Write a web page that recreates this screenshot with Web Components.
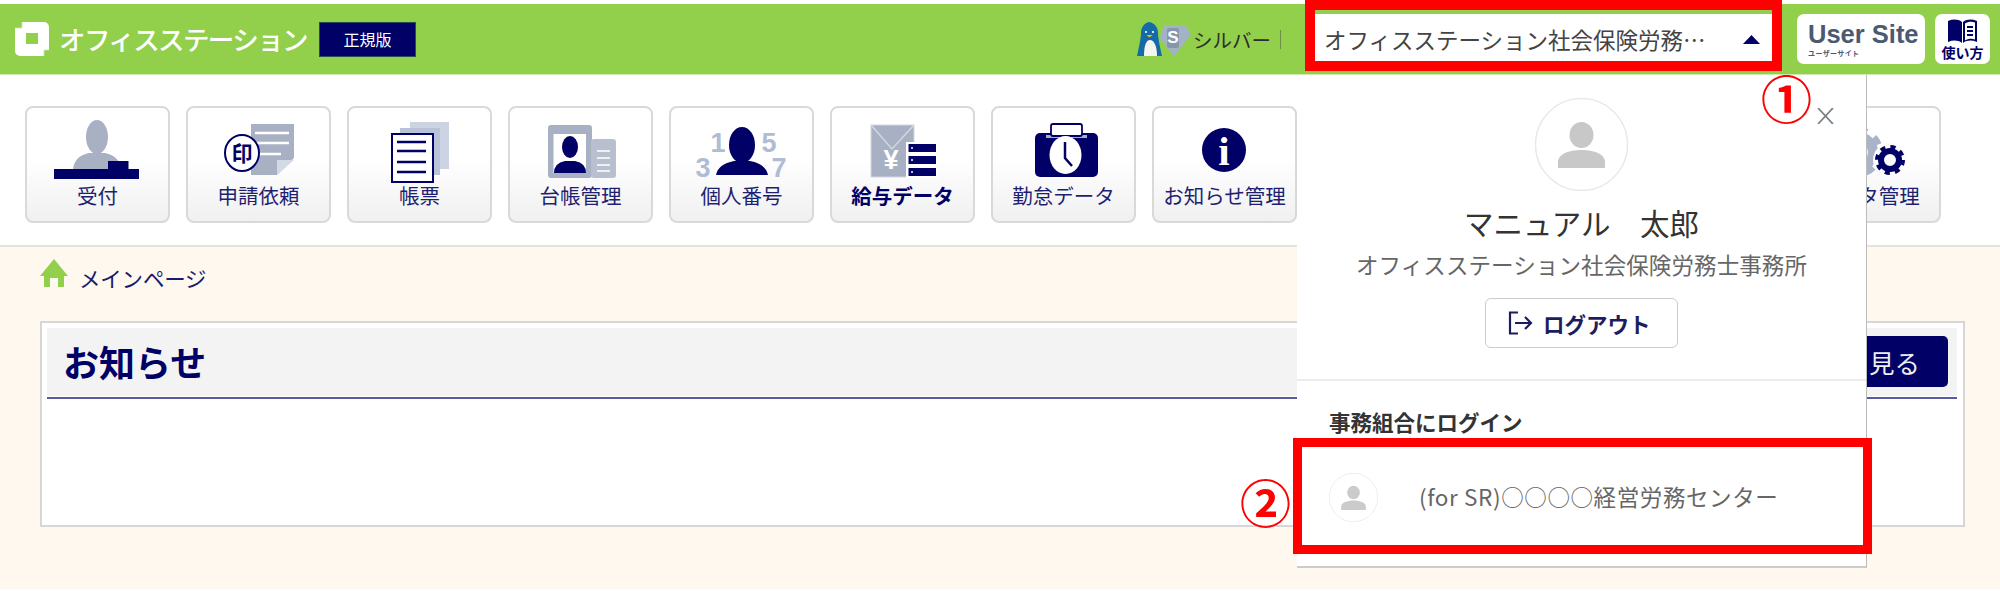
<!DOCTYPE html>
<html lang="ja"><head><meta charset="utf-8"><title>オフィスステーション</title>
<style>
html,body{margin:0;padding:0;background:#fff}
body{width:2000px;height:591px;overflow:hidden;font-family:"Noto Sans CJK JP","Noto Sans",sans-serif;position:relative}
</style></head>
<body>
<os-app></os-app>
<script>
const FONT = '"Noto Sans CJK JP","Noto Sans",sans-serif';
const NAVY = '#000066';
function el(tag, html){
  customElements.define(tag, class extends HTMLElement{
    constructor(){super();this.attachShadow({mode:'open'}).innerHTML=typeof html==='function'?html(this):html;}
  });
}
const gear=(cx,cy,r,c,hole)=>`<circle cx="${cx}" cy="${cy}" r="${r*.82}" fill="none" stroke="${c}" stroke-width="${r*.36}" stroke-dasharray="${(r*.82*2*Math.PI/16).toFixed(2)}"/><circle cx="${cx}" cy="${cy}" r="${r*.6}" fill="none" stroke="${c}" stroke-width="${r*.4}"/>`;

const ICONS={
 reception:`<ellipse cx="70" cy="29" rx="11" ry="17" fill="#a8b0c4"/><path d="M46 62q1-14 16-17h16q15 3 16 17z" fill="#a8b0c4"/><path d="M27 61h54v-8h20.500v8h10.500v10h-85z" fill="${NAVY}"/>`,
 request:`<path d="M63 16h43v34l-17 17h-26z" fill="#a8b0c4"/><path d="M89 67v-15h17z" fill="#d4d9e6"/><path d="M67 25h34M67 35h34M67 46h26" stroke="#fff" stroke-width="2.500"/><ellipse cx="54" cy="45" rx="17" ry="18" fill="#fff" stroke="${NAVY}" stroke-width="2"/><text x="54" y="53" text-anchor="middle" font-size="21" font-weight="700" fill="${NAVY}" font-family='${FONT}'>印</text>`,
 forms:`<rect x="61" y="14" width="39" height="47" fill="#ccd4e4"/><rect x="51" y="20" width="40" height="47" fill="#b8c2d8"/><rect x="43" y="26" width="41" height="48" fill="#fff" stroke="${NAVY}" stroke-width="2"/><path d="M48 34h29M48 43h29M48 54h29M48 64h29" stroke="${NAVY}" stroke-width="2.500"/>`,
 ledger:`<rect x="38" y="17" width="44" height="53" rx="3" fill="#a8b0c4"/><rect x="81" y="31" width="25" height="39" rx="3" fill="#b8c0d0"/><rect x="43.500" y="26" width="32.500" height="39" fill="#fff"/><ellipse cx="60" cy="39" rx="8" ry="11" fill="${NAVY}"/><path d="M44 65q0-10 11-12h10q11 2 11 12z" fill="${NAVY}"/><path d="M87 43h13M87 50h13M87 57h13M87 63h13" stroke="#fff" stroke-width="1.500"/>`,
 mynumber:`<g font-family="Liberation Sans" font-weight="700" font-size="27" fill="#b0bcd4" text-anchor="middle"><text x="47" y="44">1</text><text x="98" y="44">5</text><text x="32" y="69">3</text><text x="108" y="69">7</text></g><ellipse cx="71" cy="37" rx="13" ry="18" fill="${NAVY}"/><path d="M45 67q2-11 18-14h16q16 3 18 14z" fill="${NAVY}"/>`,
 salary:`<rect x="39" y="17" width="43" height="52" fill="#a8b0c4" stroke="#d3d7e0"/><path d="M39 17l21 24 22-24" fill="none" stroke="#d3d7e0" stroke-width="1.500"/><text x="59" y="61" text-anchor="middle" font-size="27" font-weight="700" fill="#fff" font-family="Liberation Sans">¥</text><g fill="#fff"><rect x="74" y="34" width="32" height="36"/></g><g fill="${NAVY}"><rect x="76.500" y="36" width="27.500" height="8"/><rect x="76.500" y="48" width="27.500" height="8"/><rect x="76.500" y="60" width="27.500" height="8"/></g><g fill="#b8c0d0"><rect x="79" y="39" width="2" height="2"/><rect x="79" y="51" width="2" height="2"/><rect x="79" y="63" width="2" height="2"/></g>`,
 attendance:`<rect x="42" y="25" width="63" height="44" rx="5" fill="${NAVY}"/><rect x="53" y="27" width="41" height="3" fill="#a8b0c4"/><rect x="58" y="16" width="31" height="12" rx="2" fill="#fff" stroke="${NAVY}" stroke-width="1.800"/><ellipse cx="72.500" cy="47" rx="16" ry="19" fill="#fff"/><path d="M72 34v16l7 8" fill="none" stroke="${NAVY}" stroke-width="2.500"/>`,
 info:`<circle cx="70" cy="42" r="22" fill="${NAVY}"/><text x="70" y="57" text-anchor="middle" font-size="41" font-weight="700" fill="#fff" font-family="Liberation Serif">i</text>`,
 master:`${gear(60,44,25,'#aab4c8')}<circle cx="92" cy="52" r="17" fill="#fbfbfb"/>${gear(92,52,15,NAVY)}`
};

el('nav-button',h=>`<style>
:host{display:flex;flex-direction:column;box-sizing:border-box;width:145px;height:117px;border:2px solid #d9d9d9;border-radius:8px;background:linear-gradient(#fff 45%,#f0f0f0);color:#1f1f72;font-size:20.500px;overflow:hidden}
svg{display:block;width:141px;height:76px;flex:none}
span{display:block;text-align:center;line-height:24px;white-space:nowrap;margin-top:-1px}
:host([strong]) span{font-weight:700;color:#000066}
</style><svg viewBox="0 0 141 76">${ICONS[h.getAttribute('icon')]||''}</svg><span><slot></slot></span>`);

el('os-logo',`<style>
:host{display:flex;align-items:center}
svg{width:34px;height:34px;display:block;flex:none}
span{font-size:26.500px;font-weight:500;color:#fff;letter-spacing:-1.600px;margin-left:10px;width:250px;white-space:nowrap;line-height:34px}
</style><svg viewBox="0 0 34 34"><path fill-rule="evenodd" d="M7 0h22a5 5 0 0 1 5 5v23h-5v6H5a5 5 0 0 1-5-5V6h7zM11 11v11h12V11z" fill="#fff"/><path d="M0 6h7V0M34 28h-5v6" fill="none" stroke="#cfe8b0" stroke-width=".8"/></svg><span><slot></slot></span>`);

el('edition-tag',`<style>
:host{display:flex;align-items:center;justify-content:center;width:97px;height:35px;background:#000066;color:#fff;font-size:16px;border:1px solid #2a4a5a;box-sizing:border-box}
</style><slot></slot>`);

el('plan-rank',`<style>
:host{display:flex;align-items:center;color:#2c2c2c;font-size:19.500px}
svg{display:block;width:54px;height:36px;flex:none}
span{margin-left:2px;white-space:nowrap;letter-spacing:0}
i{display:block;width:1px;height:19px;background:#6d8f45;margin-left:9px}
</style><svg viewBox="0 0 54 36"><path d="M27 4h21l6 9-16 21h-2L23 17z" fill="#a3b3c6"/><rect x="30" y="7" width="12" height="20" rx="2" fill="#8497ab"/><text x="36" y="22" text-anchor="middle" font-size="17" font-weight="700" fill="#fff" font-family="Liberation Sans">S</text><path d="M12 1c6 1 9 6 9 11 0 5 2 14 4 23H0C2 26 4 17 4 12 4 7 7 2 12 1z" fill="#156aa8"/><path d="M7 35c0-10 2-16 6-16s7 6 7 16z" fill="#f6f6f0"/><circle cx="9" cy="11" r="1.100" fill="#fff"/><circle cx="16" cy="11" r="1.100" fill="#fff"/><path d="M9.500 14h6l-3 2.500z" fill="#f2b81c"/></svg><span><slot></slot></span><i></i>`);

el('org-select',`<style>
:host{display:flex;align-items:center;box-sizing:border-box;width:458px;height:50px;background:#fff;color:#444;font-size:22.500px;padding-left:9px}
span{display:block;width:386px;overflow:hidden;text-overflow:ellipsis;white-space:nowrap}
svg{display:block;width:17px;height:9px;margin-left:33px}
</style><span><slot></slot></span><svg viewBox="0 0 17 9"><path d="M8.500 0L17 9H0z" fill="#000066"/></svg>`);

el('user-site-link',`<style>
:host{display:block;box-sizing:border-box;width:128px;height:50px;background:#fff;border-radius:7px;padding:7px 0 0 11px;color:#4a5a72;overflow:hidden}
b{display:block;font:700 25.500px/27px "Liberation Sans",sans-serif;white-space:nowrap}
small{display:block;font-size:7px;line-height:8px;margin-top:1px;font-weight:700;white-space:nowrap;letter-spacing:.4px}
</style><b><slot></slot></b><small>ユーザーサイト</small>`);

el('howto-link',`<style>
:host{display:flex;flex-direction:column;align-items:center;box-sizing:border-box;width:55px;height:50px;background:#fff;border-radius:7px;padding-top:5px;color:#000066;font-size:14px;font-weight:700}
svg{display:block;width:31px;height:24px}
span{line-height:16px;margin-top:1px;white-space:nowrap}
</style><svg viewBox="0 0 31 24"><path d="M1 2c5-2 10-2 14 1v21c-4-3-9-3-14-1z" fill="#000066"/><path d="M16 3c4-3 9-3 14-1v21c-5-2-10-2-14 1z" fill="#000066"/><path d="M18 4.500c3-2 7-2 10-1v17c-3-1-7-1-10 1z" fill="#fff"/><path d="M20 8h6M20 12h6M20 16h6" stroke="#000066" stroke-width="1.800"/></svg><span><slot></slot></span>`);

el('os-header',`<style>
:host{display:flex;align-items:center;box-sizing:content-box;height:70px;margin-top:4px;background:#92cf4b;border-bottom:1px solid #cfe8b0;padding:0 10px 0 15px}
.end{display:flex;align-items:center;margin-left:auto}
org-select{margin-left:34px}
user-site-link{margin-left:24px}
howto-link{margin-left:10px}
edition-tag{margin-left:10px}
</style><os-logo>オフィスステーション</os-logo><edition-tag>正規版</edition-tag>
<div class="end"><plan-rank>シルバー</plan-rank><org-select>オフィスステーション社会保険労務士事務所</org-select><user-site-link>User Site</user-site-link><howto-link>使い方</howto-link></div>`);

el('os-nav',`<style>
:host{display:flex;gap:16px;box-sizing:border-box;height:172px;padding:31px 0 0 25px;background:#fff;border-bottom:2px solid #e6e2dc}
</style>
<nav-button icon="reception">受付</nav-button><nav-button icon="request">申請依頼</nav-button><nav-button icon="forms">帳票</nav-button><nav-button icon="ledger">台帳管理</nav-button><nav-button icon="mynumber">個人番号</nav-button><nav-button icon="salary" strong>給与データ</nav-button><nav-button icon="attendance">勤怠データ</nav-button><nav-button icon="info">お知らせ管理</nav-button><nav-button></nav-button><nav-button></nav-button><nav-button></nav-button><nav-button icon="master">マスタ管理</nav-button>`);

el('os-breadcrumb',`<style>
:host{display:flex;align-items:flex-end;height:28px;color:#1a1a6e;font-size:21.500px}
svg{display:block;width:28px;height:28px;flex:none}
span{margin-left:11px;line-height:24px;margin-bottom:-3px;white-space:nowrap;letter-spacing:-.2px}
</style><svg viewBox="0 0 28 28"><path d="M14 0L28 17h-4v11h-6V19h-8v9H4V17H0z" fill="#92cf4b"/></svg><span><slot></slot></span>`);

el('os-card',`<style>
:host{display:block;box-sizing:border-box;width:1925px;height:206px;background:#fff;border:2px solid #d6d6d6;padding:5px 6px 0 5px}
header{display:flex;align-items:center;justify-content:space-between;box-sizing:border-box;height:71px;background:#f3f3f3;border-bottom:2px solid #5a5aa0;box-shadow:inset 0 -1px 0 #fff;padding:0 9px 3px 16px}
h2{margin:0;font-size:36px;line-height:44px;font-weight:700;color:#000066}
a{display:block;background:#000066;color:#eee;font-size:25.500px;line-height:51px;height:51px;padding:0 28px;border-radius:5px;white-space:nowrap}
</style><header><h2><slot></slot></h2><a>一覧を見る</a></header>`);

el('os-main',`<style>
:host{display:block;box-sizing:border-box;height:342px;background:#fff8ef;padding:12px 0 0 40px}
os-card{margin-top:34px}
</style><os-breadcrumb>メインページ</os-breadcrumb><os-card>お知らせ</os-card>`);

const person=(c)=>`<svg viewBox="0 0 93 93"><ellipse cx="46.500" cy="46.500" rx="46" ry="46" fill="#fff" stroke="#e8e8e8" stroke-width="1.500"/><ellipse cx="46.500" cy="37" rx="12" ry="13" fill="${c}"/><path d="M23 70v-6c0-8 11-12 23.500-12S70 56 70 64v6z" fill="${c}"/></svg>`;

el('org-item',`<style>
:host{display:flex;align-items:center;color:#666;font-size:22.500px;white-space:nowrap}
svg{display:block;width:49px;height:49px;flex:none}
span{margin:0 0 3px 41px;letter-spacing:.6px}
</style>${person('#cbcbcb')}<span><slot></slot></span>`);

el('user-popover',`<style>
:host{position:absolute;left:1297px;top:75px;width:570px;height:493px;box-sizing:border-box;background:#fff;border-right:1px solid #bbb;border-bottom:2px solid #ccc;display:flex;flex-direction:column;align-items:center;color:#333}
.close{position:absolute;left:520px;top:33px;width:17px;height:16px;display:block}
.avatar{display:block;width:93px;height:93px;margin-top:23px;flex:none}
.avatar svg{display:block}
.name{font-size:29.500px;line-height:40px;margin-top:11px;white-space:nowrap;color:#333}
.org{font-size:22.500px;line-height:30px;margin-top:7px;color:#666;white-space:nowrap;letter-spacing:.1px}
.logout{display:flex;align-items:center;box-sizing:border-box;width:193px;height:50px;margin-top:19px;border:1.500px solid #ccc;border-radius:6px;padding-left:22px;color:#1d1d5e;font-size:21.500px;font-weight:700}
.logout svg{display:block;width:26px;height:24px;flex:none;margin-right:9px}
.section{align-self:stretch;margin-top:31px;border-top:2px solid #ececec;padding:25px 0 0 32px}
h3{margin:0;font-size:21.500px;line-height:32px;font-weight:700;color:#333}
org-item{margin-top:35px}
</style>
<svg class="close" viewBox="0 0 17 16"><path d="M1 0l15 16M16 0L1 16" stroke="#7a8288" stroke-width="1.800" fill="none"/></svg>
<div class="avatar">${person('#c8c8c8')}</div>
<div class="name">マニュアル　太郎</div>
<div class="org">オフィスステーション社会保険労務士事務所</div>
<div class="logout"><svg viewBox="0 0 26 24"><path d="M10 1.500H2v21h8" fill="none" stroke="#1d1d5e" stroke-width="2.200"/><path d="M7 12h16M17 6l6 6-6 6" fill="none" stroke="#1d1d5e" stroke-width="2.200"/></svg>ログアウト</div>
<div class="section"><h3>事務組合にログイン</h3><org-item>(for SR)○○○○経営労務センター</org-item></div>`);

el('red-frame',h=>`<style>
:host{position:absolute;box-sizing:border-box;border:solid #ff0000;left:${h.getAttribute('x')}px;top:${h.getAttribute('y')}px;width:${h.getAttribute('w')}px;height:${h.getAttribute('h')}px;border-width:${h.getAttribute('t')}px}
</style>`);

el('step-mark',h=>`<style>
:host{position:absolute;left:${h.getAttribute('x')}px;top:${h.getAttribute('y')}px;color:#ff0000;font-size:51px;line-height:51px;font-weight:700;font-family:${FONT}}
</style><slot></slot>`);

el('os-app',`<style>
:host{display:block;position:relative;width:2000px;height:591px;overflow:hidden}
</style><os-header></os-header><os-nav></os-nav><os-main></os-main><user-popover></user-popover>
<red-frame x="1305" y="0" w="477" h="71" t="10"></red-frame>
<red-frame x="1293" y="438" w="579" h="116" t="9"></red-frame>
<step-mark x="1761" y="72">①</step-mark>
<step-mark x="1240" y="476">②</step-mark>`);
</script>
</body></html>
